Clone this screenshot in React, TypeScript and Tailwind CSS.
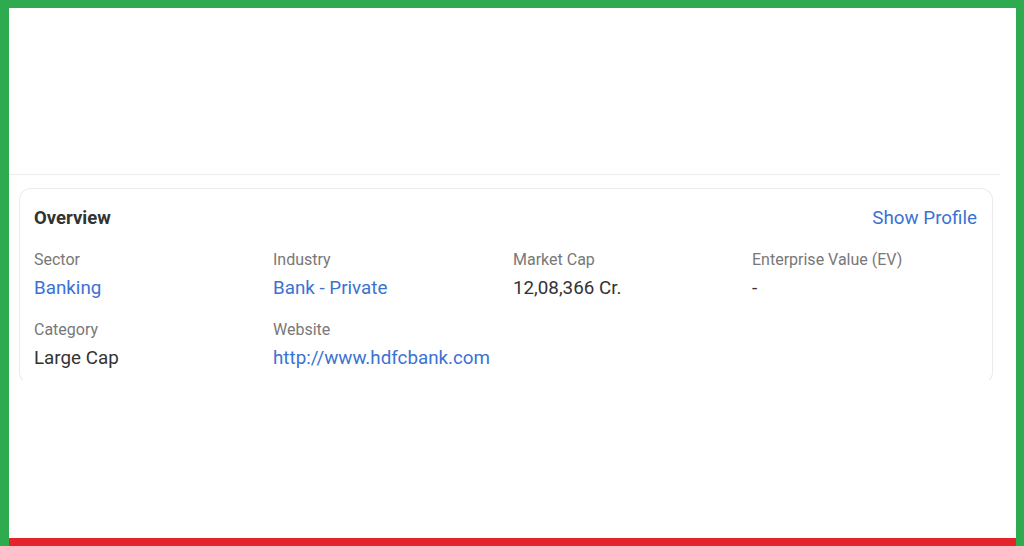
const items = [
  { label: "Sector", value: "Banking", link: true },
  { label: "Industry", value: "Bank - Private", link: true },
  { label: "Market Cap", value: "12,08,366 Cr.", link: false },
  { label: "Enterprise Value (EV)", value: "-", link: false },
  { label: "Category", value: "Large Cap", link: false },
  { label: "Website", value: "http://www.hdfcbank.com", link: true },
];

export default function App() {
  return (
    <div
      className="flex h-[546px] w-[1024px] flex-col overflow-hidden border-t-8 border-r-8 border-l-[9px] border-[#2eaa4f] bg-white"
      style={{ fontFamily: "Roboto, 'Liberation Sans', sans-serif" }}
    >
      <div className="flex-1 pr-[16px]">
        {/* empty chart area above */}
        <div className="h-[167px] border-b border-[#ececec]" />

        {/* Overview card */}
        <div className="ml-[10px] mt-[13px] h-[196px] w-[974px] rounded-xl border border-[#ebebeb] border-b-transparent pl-[14px] pr-[15px] pt-[17px]">
          <div className="flex items-center justify-between">
            <h2 className="text-[18.5px] font-bold leading-[24px] text-[#333]">Overview</h2>
            <a href="#" className="text-[18.8px] leading-[24px] text-[#3a72d4]">
              Show Profile
            </a>
          </div>

          <div className="mt-[19px] grid grid-cols-[239px_240px_239px_1fr] gap-y-[20px]">
            {items.map((item) => (
              <div key={item.label}>
                <div className="text-[16px] leading-[22px] text-[#787878]">{item.label}</div>
                <div
                  className={`mt-[6px] text-[18.8px] leading-[22px] ${
                    item.link ? "text-[#3a72d4]" : "text-[#333]"
                  }`}
                >
                  {item.value}
                </div>
              </div>
            ))}
          </div>
        </div>
      </div>
      <div className="h-2 bg-[#e5232b]" />
    </div>
  );
}
